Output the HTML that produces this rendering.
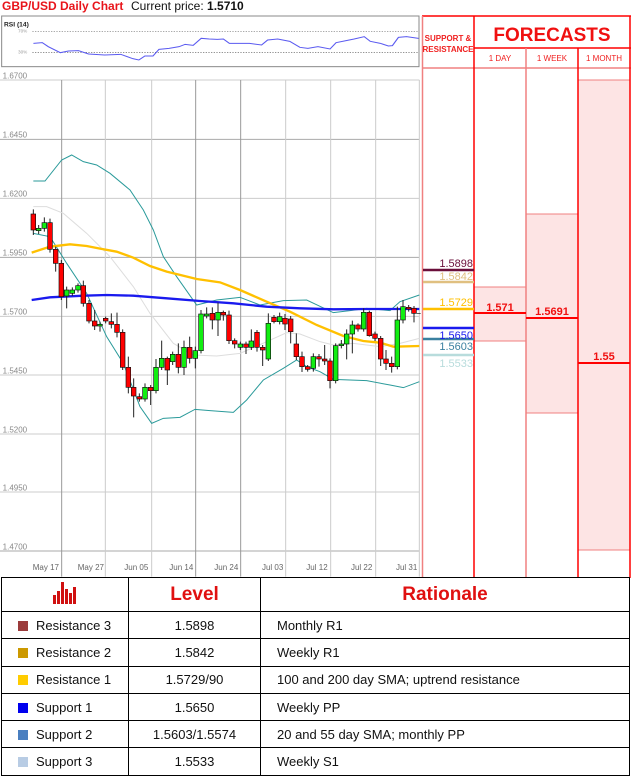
<!DOCTYPE html>
<html><head><meta charset="utf-8"><style>
*{margin:0;padding:0;box-sizing:border-box}
body{width:631px;height:776px;background:#fff;position:relative;overflow:hidden;font-family:"Liberation Sans",sans-serif}
.abs{position:absolute}
table{border-collapse:collapse;position:absolute;left:1px;top:577px;width:629px}
td{border:1.5px solid #000;font-size:13px;color:#111;height:27.3px}
.sq{display:inline-block;width:10px;height:10px;margin:0 8px 0 16px;vertical-align:-1px}
</style></head><body>
<div class="abs" style="left:2px;top:-1px;font-size:12px;font-weight:bold;color:#e8141a">GBP/USD Daily Chart</div>
<div class="abs" style="left:131px;top:-1px;font-size:12px;color:#111">Current price: <b>1.5710</b></div>

<svg class="abs" style="left:0;top:0" width="631" height="90" viewBox="0 0 1893 270">
<rect x="5" y="48" width="1252" height="152" fill="none" stroke="#888" stroke-width="3"/>
<text x="12" y="80" font-size="20" font-weight="bold" fill="#222" font-family="Liberation Sans">RSI (14)</text>
<text x="54" y="98" font-size="14" fill="#999" font-family="Liberation Sans">70%</text>
<text x="54" y="161" font-size="14" fill="#999" font-family="Liberation Sans">30%</text>
<line x1="97" y1="94" x2="1257" y2="94" stroke="#777" stroke-width="2" stroke-dasharray="4 4"/>
<line x1="97" y1="157" x2="1257" y2="157" stroke="#555" stroke-width="2" stroke-dasharray="4 4"/>
<g transform="scale(1.2074 1)">
<polyline fill="none" stroke="#5a5af0" stroke-width="3" points="83,130 105,128 120,140 150,158 170,153 195,152 220,162 260,165 300,163 330,176 345,180 360,168 380,168 395,148 420,145 445,140 460,133 480,136 500,115 520,117 540,118 555,117 570,130 620,130 650,135 665,120 690,117 720,124 745,142 765,145 790,140 820,147 835,128 860,122 880,117 905,110 920,124 945,130 965,138 975,137 990,112 1010,110 1040,115"/>
</g>
</svg>

<!-- main chart -->
<svg class="abs" style="left:0;top:60px" width="430" height="520" viewBox="0 0 1290 1560" font-family="Liberation Sans">
<g stroke="#ccc" stroke-width="3">
<line x1="0" y1="60" x2="1258" y2="60"/><line x1="0" y1="238" x2="1258" y2="238" stroke="#aaa"/><line x1="0" y1="415" x2="1258" y2="415"/><line x1="0" y1="592" x2="1258" y2="592" stroke="#aaa"/><line x1="0" y1="769" x2="1258" y2="769"/><line x1="0" y1="945" x2="1258" y2="945"/><line x1="0" y1="1122" x2="1258" y2="1122"/><line x1="0" y1="1296" x2="1258" y2="1296"/><line x1="0" y1="1473" x2="1258" y2="1473" stroke="#aaa"/>
<line x1="185" y1="60" x2="185" y2="1550" stroke="#999"/><line x1="316" y1="60" x2="316" y2="1550"/><line x1="455" y1="60" x2="455" y2="1550"/><line x1="587" y1="60" x2="587" y2="1550" stroke="#999"/><line x1="722" y1="60" x2="722" y2="1550" stroke="#999"/><line x1="857" y1="60" x2="857" y2="1550"/><line x1="992" y1="60" x2="992" y2="1550"/><line x1="1127" y1="60" x2="1127" y2="1550"/><line x1="1258" y1="60" x2="1258" y2="1550"/>
</g>
<g font-size="24" fill="#888">
<text x="8" y="55">1.6700</text><text x="8" y="233">1.6450</text><text x="8" y="410">1.6200</text><text x="8" y="587">1.5950</text><text x="8" y="764">1.5700</text><text x="8" y="940">1.5450</text><text x="8" y="1117">1.5200</text><text x="8" y="1291">1.4950</text><text x="8" y="1468">1.4700</text>
</g>
<g font-size="24" fill="#666" text-anchor="end">
<text x="177" y="1530">May 17</text><text x="312" y="1530">May 27</text><text x="445" y="1530">Jun 05</text><text x="580" y="1530">Jun 14</text><text x="715" y="1530">Jun 24</text><text x="850" y="1530">Jul 03</text><text x="983" y="1530">Jul 12</text><text x="1117" y="1530">Jul 22</text><text x="1252" y="1530">Jul 31</text>
</g>
<polyline fill="none" stroke="#ddd" stroke-width="3" points="100,440 140,440 190,460 260,520 330,590 400,680 450,760 520,850 580,885 650,888 720,880 800,845 860,818 900,822 960,845 1000,855 1060,850 1140,860 1200,850 1258,835"/>
<polyline fill="none" stroke="#2a9a9a" stroke-width="3" points="100,363 135,363 185,300 215,285 250,305 290,315 330,340 390,390 430,450 460,510 490,590 530,650 590,735 650,720 720,712 780,735 850,722 920,720 1000,758 1050,752 1100,745 1170,752 1200,725 1258,705"/>
<polyline fill="none" stroke="#2a9a9a" stroke-width="3" points="100,520 150,530 200,610 260,700 320,830 370,910 420,1040 455,1090 490,1075 540,1072 585,1048 630,1052 700,1057 740,1020 790,960 850,925 890,900 920,920 960,935 1000,958 1100,962 1170,975 1210,983 1258,965"/>
<polyline fill="none" stroke="#ffc000" stroke-width="7" points="95,578 150,560 210,553 260,558 300,566 350,575 400,593 450,618 500,635 590,657 660,667 720,690 800,725 870,755 950,795 1030,828 1090,843 1140,848 1180,860 1258,858"/>
<polyline fill="none" stroke="#1a1aee" stroke-width="7" points="95,720 150,712 250,707 320,705 400,707 500,715 600,723 700,730 800,740 900,745 1000,748 1100,747 1258,747"/>
<g stroke="#222" stroke-width="3">
<path d="M100 448V525M116 495V522M133 472V515M150 476V578M167 560V635M184 600V720M200 680V745M217 682V708M234 670V698M250 662V740M267 720V790M284 750V810M300 785V815M317 770V790M334 760V805M351 758V832M368 808V930M385 890V1000M401 955V1072M418 1000V1025M435 970V1025M452 975V1035M468 897V1000M485 842V930M502 890V975M518 875V915M535 850V940M552 842V945M569 830V910M586 860V925M603 750V880M620 742V775M637 742V808M654 728V828M670 752V782M687 752V852M704 835V865M721 845V870M738 845V882M754 808V870M771 810V875M788 855V918M805 760V903M822 765V790M839 758V793M855 762V810M872 768V850M889 820V900M906 875V936M923 915V935M940 880V935M957 882V920M974 855V915M990 895V985M1007 850V970M1024 840V865M1040 808V898M1057 782V880M1074 790V815M1091 745V815M1108 752V830M1125 815V843M1142 828V918M1158 870V930M1175 890V938M1192 740V928M1209 720V790M1226 735V755M1242 738V787"/>
</g>
<g stroke="#111" stroke-width="2">
<rect x="93" y="462" width="14" height="48" fill="#f00"/><rect x="109" y="505" width="14" height="7" fill="#1e1"/><rect x="126" y="488" width="14" height="17" fill="#1e1"/><rect x="143" y="488" width="14" height="80" fill="#f00"/><rect x="160" y="568" width="14" height="42" fill="#f00"/><rect x="177" y="610" width="14" height="100" fill="#f00"/><rect x="193" y="690" width="14" height="18" fill="#1e1"/><rect x="210" y="690" width="14" height="10" fill="#1e1"/><rect x="227" y="677" width="14" height="13" fill="#1e1"/><rect x="243" y="677" width="14" height="53" fill="#f00"/><rect x="260" y="730" width="14" height="53" fill="#f00"/><rect x="277" y="783" width="14" height="15" fill="#f00"/><rect x="293" y="793" width="14" height="5" fill="#1e1"/><rect x="310" y="775" width="14" height="8" fill="#f00"/><rect x="327" y="785" width="14" height="8" fill="#f00"/><rect x="344" y="793" width="14" height="24" fill="#f00"/><rect x="361" y="817" width="14" height="105" fill="#f00"/><rect x="378" y="922" width="14" height="60" fill="#f00"/><rect x="394" y="982" width="14" height="26" fill="#f00"/><rect x="411" y="1010" width="14" height="7" fill="#f00"/><rect x="428" y="982" width="14" height="35" fill="#1e1"/><rect x="445" y="982" width="14" height="10" fill="#f00"/><rect x="461" y="922" width="14" height="70" fill="#1e1"/><rect x="478" y="895" width="14" height="27" fill="#1e1"/><rect x="495" y="895" width="14" height="35" fill="#f00"/><rect x="511" y="883" width="14" height="22" fill="#1e1"/><rect x="528" y="883" width="14" height="39" fill="#f00"/><rect x="545" y="862" width="14" height="60" fill="#1e1"/><rect x="562" y="862" width="14" height="33" fill="#f00"/><rect x="579" y="872" width="14" height="23" fill="#1e1"/><rect x="596" y="762" width="14" height="110" fill="#1e1"/><rect x="613" y="762" width="14" height="6" fill="#1e1"/><rect x="630" y="760" width="14" height="20" fill="#f00"/><rect x="647" y="757" width="14" height="23" fill="#1e1"/><rect x="663" y="757" width="14" height="8" fill="#f00"/><rect x="680" y="765" width="14" height="77" fill="#f00"/><rect x="697" y="842" width="14" height="10" fill="#f00"/><rect x="714" y="852" width="14" height="10" fill="#1e1"/><rect x="731" y="852" width="14" height="10" fill="#f00"/><rect x="747" y="843" width="14" height="19" fill="#1e1"/><rect x="764" y="817" width="14" height="45" fill="#f00"/><rect x="781" y="862" width="14" height="8" fill="#f00"/><rect x="798" y="790" width="14" height="107" fill="#1e1"/><rect x="815" y="772" width="14" height="13" fill="#f00"/><rect x="832" y="770" width="14" height="15" fill="#1e1"/><rect x="848" y="775" width="14" height="17" fill="#f00"/><rect x="865" y="777" width="14" height="38" fill="#f00"/><rect x="882" y="852" width="14" height="38" fill="#f00"/><rect x="899" y="890" width="14" height="30" fill="#f00"/><rect x="916" y="920" width="14" height="8" fill="#f00"/><rect x="933" y="890" width="14" height="35" fill="#1e1"/><rect x="950" y="890" width="14" height="7" fill="#f00"/><rect x="967" y="897" width="14" height="6" fill="#f00"/><rect x="983" y="903" width="14" height="59" fill="#f00"/><rect x="1000" y="857" width="14" height="105" fill="#1e1"/><rect x="1017" y="852" width="14" height="5" fill="#1e1"/><rect x="1033" y="822" width="14" height="30" fill="#1e1"/><rect x="1050" y="795" width="14" height="27" fill="#1e1"/><rect x="1067" y="795" width="14" height="12" fill="#f00"/><rect x="1084" y="757" width="14" height="50" fill="#1e1"/><rect x="1101" y="757" width="14" height="70" fill="#f00"/><rect x="1118" y="822" width="14" height="13" fill="#f00"/><rect x="1135" y="835" width="14" height="62" fill="#f00"/><rect x="1151" y="897" width="14" height="13" fill="#f00"/><rect x="1168" y="910" width="14" height="10" fill="#f00"/><rect x="1185" y="780" width="14" height="140" fill="#1e1"/><rect x="1202" y="740" width="14" height="40" fill="#1e1"/><rect x="1219" y="742" width="14" height="5" fill="#f00"/><rect x="1235" y="745" width="14" height="15" fill="#f00"/>
<line x1="1250" y1="760" x2="1262" y2="760"/>
</g>
</svg>

<!-- right panel -->
<svg class="abs" style="left:0;top:0" width="631" height="580" viewBox="0 0 631 580" font-family="Liberation Sans">
<rect x="578" y="80" width="52" height="470" fill="#fde4e4"/>
<rect x="526" y="214" width="52" height="199" fill="#fde4e4" stroke="#f08080" stroke-width="1"/>
<rect x="474" y="287" width="52" height="54" fill="#fde4e4" stroke="#f08080" stroke-width="1"/>
<line x1="578" y1="80" x2="630" y2="80" stroke="#f08080"/>
<line x1="578" y1="550" x2="630" y2="550" stroke="#f08080"/>
<g stroke="#f00" stroke-width="1.5">
<line x1="422" y1="16" x2="631" y2="16"/>
<line x1="474" y1="48" x2="631" y2="48"/>
<line x1="422" y1="68" x2="631" y2="68" stroke="#f08080"/>
<line x1="422.5" y1="16" x2="422.5" y2="578" stroke="#f08080"/>
<line x1="474" y1="16" x2="474" y2="578"/>
<line x1="526" y1="48" x2="526" y2="578" stroke="#f08080"/>
<line x1="578" y1="48" x2="578" y2="578"/>
<line x1="630" y1="16" x2="630" y2="578"/>
</g>
<text x="448" y="41" font-size="8" font-weight="bold" fill="#f02020" text-anchor="middle">SUPPORT &amp;</text>
<text x="448" y="52" font-size="8" font-weight="bold" fill="#f02020" text-anchor="middle">RESISTANCE</text>
<text x="552" y="41" font-size="19" font-weight="bold" fill="#f01010" text-anchor="middle">FORECASTS</text>
<text x="500" y="61" font-size="8" fill="#f02020" text-anchor="middle">1 DAY</text>
<text x="552" y="61" font-size="8" fill="#f02020" text-anchor="middle">1 WEEK</text>
<text x="604" y="61" font-size="8" fill="#f02020" text-anchor="middle">1 MONTH</text>
<line x1="474" y1="313" x2="526" y2="313" stroke="#f00" stroke-width="2"/>
<line x1="526" y1="318" x2="578" y2="318" stroke="#f00" stroke-width="2"/>
<line x1="578" y1="363" x2="630" y2="363" stroke="#f00" stroke-width="2"/>
<g font-size="11" font-weight="bold" fill="#f01010" text-anchor="middle">
<text x="500" y="311">1.571</text><text x="552" y="315">1.5691</text><text x="604" y="360">1.55</text>
</g>
<g stroke-width="2.5">
<line x1="423" y1="270" x2="474" y2="270" stroke="#6a0f3a"/>
<line x1="423" y1="282" x2="474" y2="282" stroke="#e0c080"/>
<line x1="423" y1="309" x2="474" y2="309" stroke="#ffc000"/>
<line x1="423" y1="328" x2="474" y2="328" stroke="#1a1aee"/>
<line x1="423" y1="339" x2="474" y2="339" stroke="#3a80a0"/>
<line x1="423" y1="355" x2="474" y2="355" stroke="#b8dcdc"/>
</g>
<g font-size="11" text-anchor="end">
<text x="473" y="267" fill="#6a0f3a">1.5898</text>
<text x="473" y="280" fill="#e0c080">1.5842</text>
<text x="473" y="306" fill="#ffc000">1.5729</text>
<text x="473" y="339" fill="#1a1aee">1.5650</text>
<text x="473" y="350" fill="#3a80a0">1.5603</text>
<text x="473" y="367" fill="#b8dcdc">1.5533</text>
</g>
</svg>

<table>
<tr style="height:34px"><td style="width:127px;text-align:center"><svg width="24" height="22" viewBox="0 0 24 22"><g fill="#d01010"><rect x="0" y="13" width="3" height="9"/><rect x="4" y="9" width="3" height="13"/><rect x="8" y="0" width="3" height="22"/><rect x="12" y="7" width="3" height="15"/><rect x="16" y="11" width="3" height="11"/><rect x="20" y="5" width="3" height="17"/></g></svg></td>
<td style="width:132px;text-align:center;font-size:19px;font-weight:bold;color:#e01010">Level</td>
<td style="text-align:center;font-size:19px;font-weight:bold;color:#e01010">Rationale</td></tr>
<tr><td><span class="sq" style="background:#9b3b3b"></span>Resistance 3</td><td style="text-align:center">1.5898</td><td style="padding-left:16px">Monthly R1</td></tr>
<tr><td><span class="sq" style="background:#cc9900"></span>Resistance 2</td><td style="text-align:center">1.5842</td><td style="padding-left:16px">Weekly R1</td></tr>
<tr><td><span class="sq" style="background:#ffcc00"></span>Resistance 1</td><td style="text-align:center">1.5729/90</td><td style="padding-left:16px">100 and 200 day SMA; uptrend resistance</td></tr>
<tr><td><span class="sq" style="background:#0000ee"></span>Support 1</td><td style="text-align:center">1.5650</td><td style="padding-left:16px">Weekly PP</td></tr>
<tr><td><span class="sq" style="background:#4a7fc0"></span>Support 2</td><td style="text-align:center">1.5603/1.5574</td><td style="padding-left:16px">20 and 55 day SMA; monthly PP</td></tr>
<tr><td><span class="sq" style="background:#b8cce4"></span>Support 3</td><td style="text-align:center">1.5533</td><td style="padding-left:16px">Weekly S1</td></tr>
</table>
</body></html>
